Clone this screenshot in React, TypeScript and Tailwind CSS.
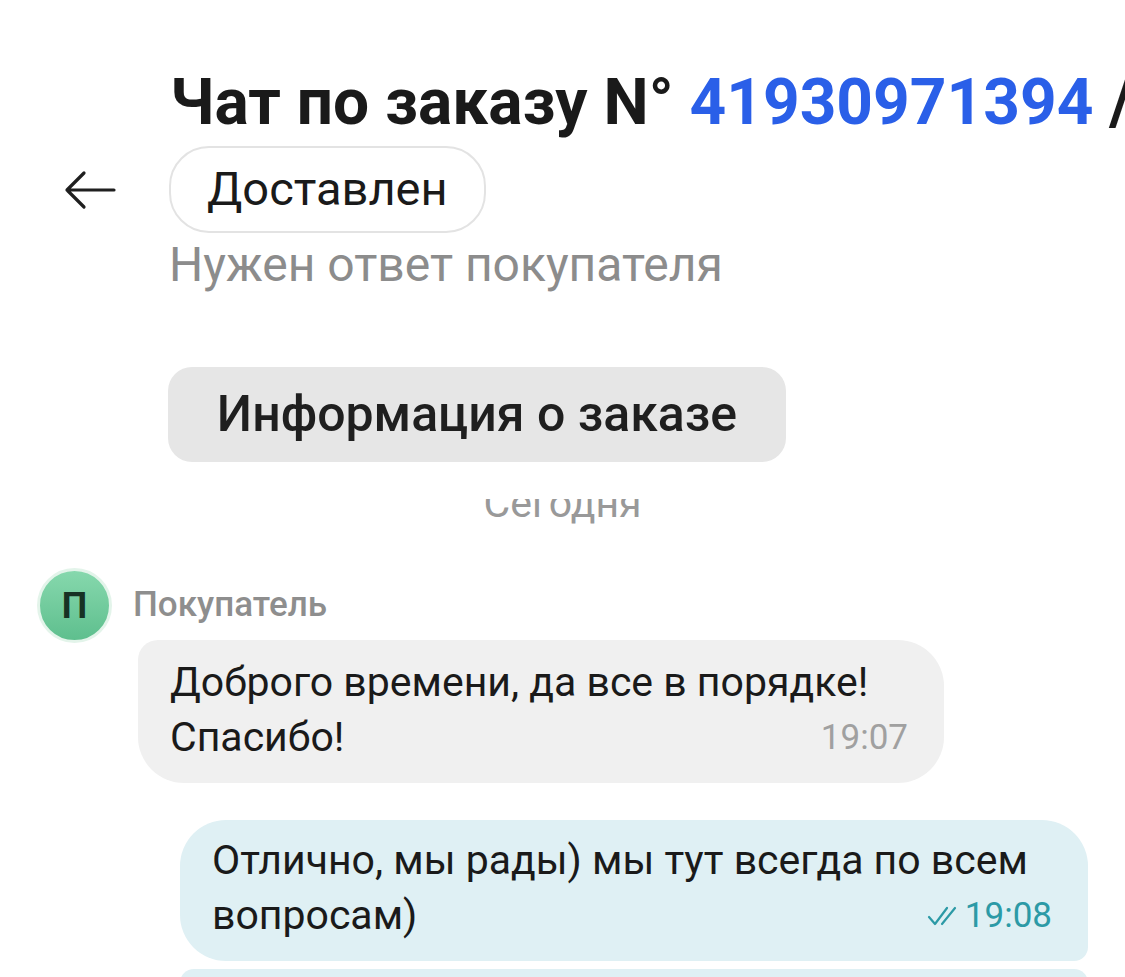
import React from 'react';

const font = { fontFamily: 'Roboto, "Noto Sans", sans-serif' };

function BackArrow() {
  return (
    <svg width="52" height="40" viewBox="0 0 52 40" fill="none" stroke="#1f1f1f" strokeWidth={3.2} strokeLinecap="round" strokeLinejoin="round">
      <path d="M50 20H3M20 3L3 20l17 17" />
    </svg>
  );
}

function DoubleCheck() {
  return (
    <svg width="32" height="22" viewBox="0 0 32 22" fill="none" stroke="#2c9aa6" strokeWidth={2.2} strokeLinecap="round" strokeLinejoin="round">
      <path d="M2 12l6 7L20 3" />
      <path d="M15 19L28 3" />
    </svg>
  );
}

export default function App() {
  return (
    <div className="w-[1125px] h-[977px] overflow-hidden bg-white text-[#1a1a1a]" style={font}>
      {/* Header */}
      <div className="pt-[67px]">
        <h1 className="pl-[170px] whitespace-nowrap text-[64px] leading-[72px] font-bold">
          Чат по заказу N° <span className="text-[#2a5fe8]">41930971394</span> /
        </h1>

        <div className="mt-[7px] flex items-center pl-[64px]">
          <div className="w-[105px] flex items-center">
            <BackArrow />
          </div>
          <div className="h-[87px] px-[36px] flex items-center rounded-[40px] border-2 border-[#e3e3e3] text-[47px]">
            Доставлен
          </div>
        </div>

        <p className="mt-[4px] pl-[169px] text-[48px] leading-[56px] text-[#8c8c8c]">Нужен ответ покупателя</p>

        <div className="mt-[74px] ml-[168px] w-[618px] h-[95px] flex items-center justify-center rounded-[24px] bg-[#e6e6e6] text-[50px] font-medium text-[#1f1f1f]">
          Информация о заказе
        </div>
      </div>

      {/* Date label, partly hidden under header */}
      <div className="mt-[37px] h-[28px] overflow-hidden flex justify-center">
        <span className="-mt-[18px] text-[41px] leading-[44px] text-[#999999]">Сегодня</span>
      </div>

      {/* Messages */}
      <div className="mt-[41px]">
        <div className="flex items-center pl-[37px]">
          <div className="w-[75px] h-[75px] rounded-full border-[3px] border-[#e3f4ea] bg-gradient-to-b from-[#86d8ad] to-[#5ebf8e] flex items-center justify-center text-[36px] font-bold text-[#173224]">
            П
          </div>
          <span className="ml-[21px] text-[35px] font-medium text-[#8e8e8e]">Покупатель</span>
        </div>

        <div className="-mt-[3px] ml-[138px] w-[806px] rounded-[46px] rounded-tl-[20px] bg-[#f0f0f0] pl-[32px] pr-[36px] pt-[15px] pb-[18px] text-[41px] leading-[55px]">
          Доброго времени, да все в порядке!
          <br />
          Спасибо!
          <span className="float-right text-[35px] text-[#a0a0a0]">19:07</span>
        </div>

        <div className="mt-[37px] ml-[180px] w-[908px] rounded-[46px] rounded-br-[14px] bg-[#dff0f4] pl-[32px] pr-[36px] pt-[13px] pb-[18px] text-[41px] leading-[55px]">
          Отлично, мы рады) мы тут всегда по всем
          <br />
          вопросам)
          <span className="float-right flex items-center gap-[6px] text-[35px] text-[#2c9aa6]">
            <DoubleCheck />
            19:08
          </span>
        </div>

        <div className="mt-[8px] ml-[180px] w-[908px] h-[80px] rounded-t-[14px] bg-[#dff0f4]" />
      </div>
    </div>
  );
}
